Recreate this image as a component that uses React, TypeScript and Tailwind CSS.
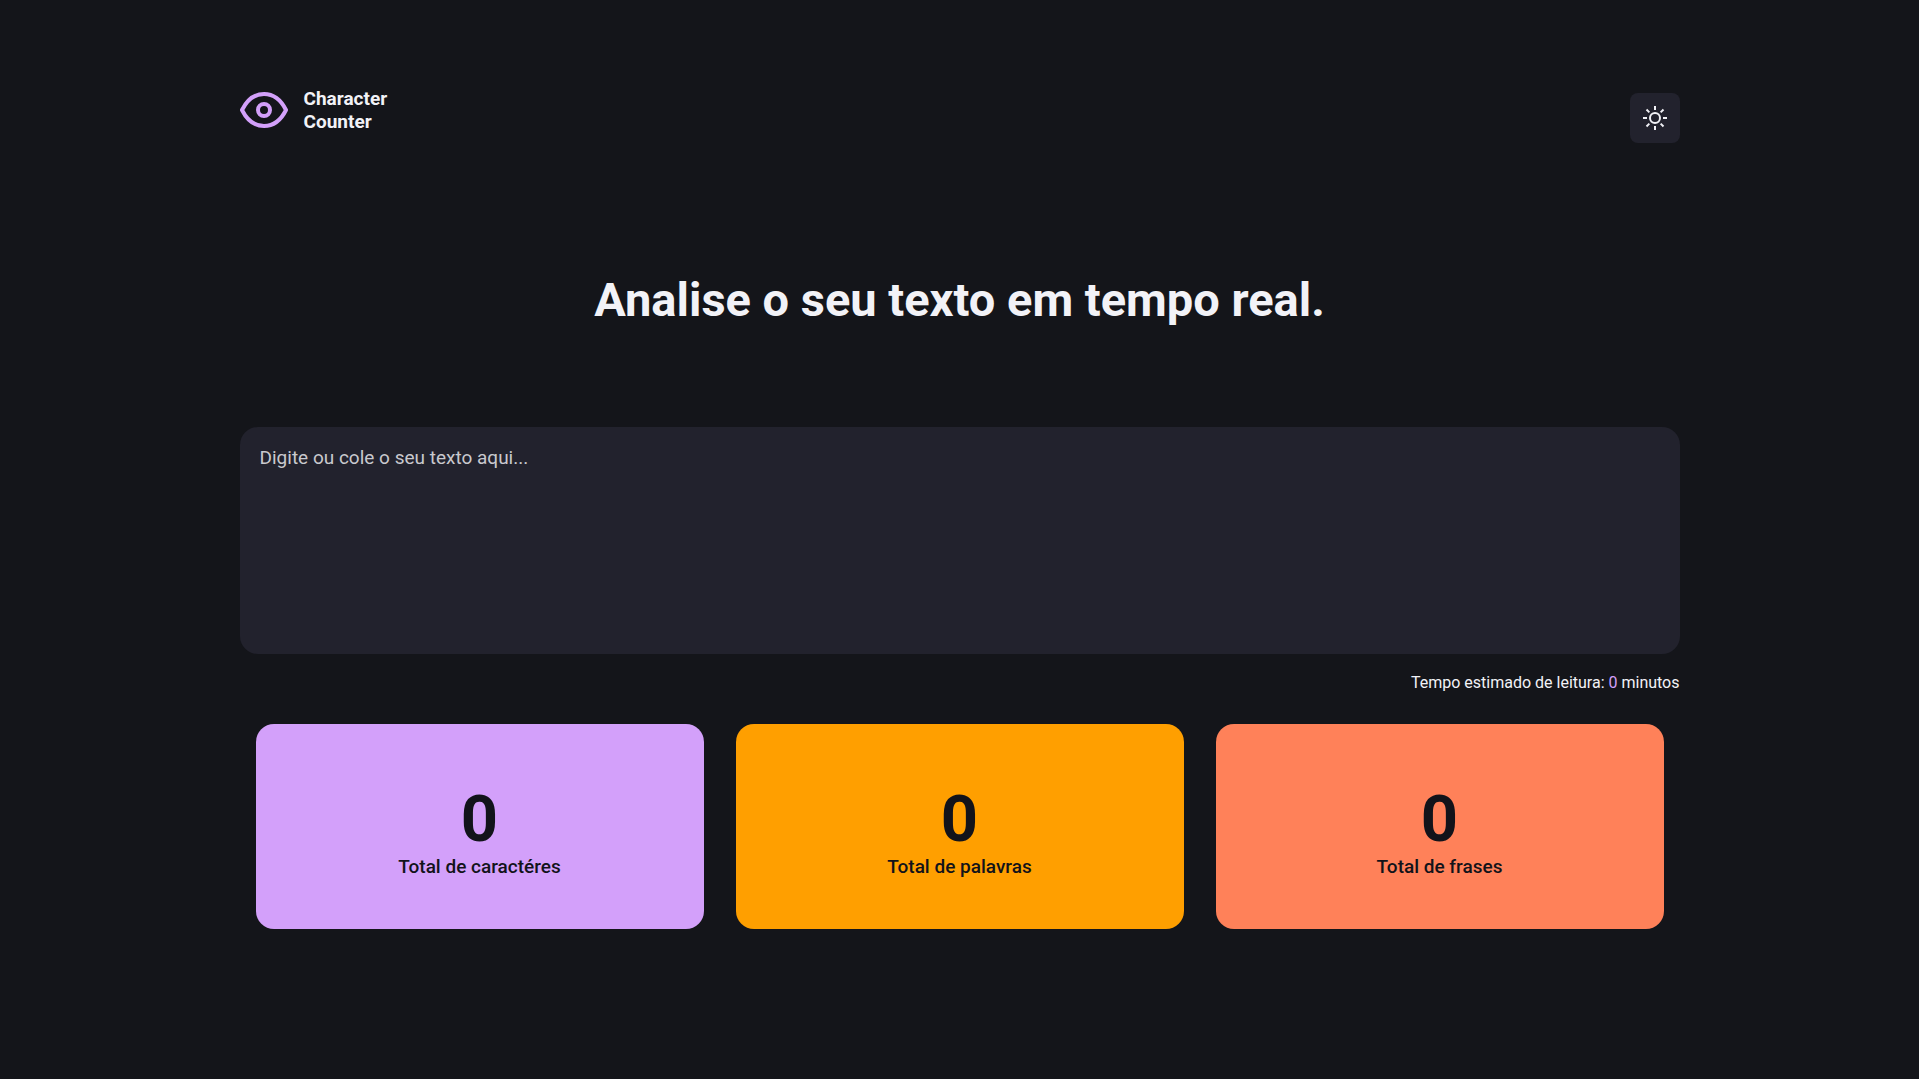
import { useState } from "react";

const rays = [0, 45, 90, 135, 180, 225, 270, 315];

function EyeIcon() {
  return (
    <svg viewBox="0 0 48 36" className="h-9 w-12 shrink-0" fill="none" stroke="#d3a0fa" strokeWidth="4" strokeLinejoin="round" aria-hidden="true">
      <path d="M24 2C14.5 2 7 8 2 18c5 10 12.500 16 22 16s17-6 22-16C41 8 33.500 2 24 2Z" />
      <circle cx="24" cy="18" r="6" />
    </svg>
  );
}

function SunIcon() {
  return (
    <svg viewBox="0 0 24 24" className="size-6" fill="none" stroke="#f2f2f7" strokeWidth="2" aria-hidden="true">
      <circle cx="12" cy="12" r="5" />
      {rays.map((angle) => (
        <path key={angle} d="M12 0v4" transform={`rotate(${angle} 12 12)`} />
      ))}
    </svg>
  );
}

function StatCard({ value, label, color }: { value: number; label: string; color: string }) {
  return (
    <article className={`flex flex-1 flex-col items-center rounded-[18px] px-6 pt-[61px] pb-[50px] text-[#12131a] ${color}`}>
      <strong className="text-[65px] leading-[68px] font-bold">{value}</strong>
      <span className="mt-[2px] text-[19px] leading-6 font-medium">{label}</span>
    </article>
  );
}

export default function App() {
  const [text, setText] = useState("");
  const words = text.trim() ? text.trim().split(/\s+/).length : 0;
  const sentences = text.split(/[.!?]+/).filter((part) => part.trim()).length;

  return (
    <div className="min-h-screen bg-[#14151a] px-6 font-['Roboto',sans-serif] text-[#f2f2f7]">
      <div className="mx-auto max-w-[1440px] pt-[87px] pb-16">
        <header className="flex items-start justify-between">
          <a href="#" className="flex items-center gap-4 text-[19px] leading-[23px] font-bold">
            <EyeIcon />
            <span>
              Character
              <br />
              Counter
            </span>
          </a>
          <button type="button" aria-label="Alternar tema" className="mt-[6px] flex size-[50px] items-center justify-center rounded-lg bg-[#22222d]">
            <SunIcon />
          </button>
        </header>
        <main>
          <h1 className="mt-32 text-center text-[47px] leading-[58px] font-bold">Analise o seu texto em tempo real.</h1>
          <textarea
            aria-label="Texto para análise"
            placeholder="Digite ou cole o seu texto aqui..."
            value={text}
            onChange={(event) => setText(event.target.value)}
            className="mt-[98px] block h-[227px] w-full resize-none rounded-[18px] bg-[#22222d] px-5 py-[19px] text-[19px] leading-6 outline-none placeholder:text-[#c9c9ce]"
          />
          <p className="mt-[19px] text-right text-base leading-5">
            Tempo estimado de leitura: <span className="text-[#d3a0fa]">{Math.ceil(words / 200)}</span> minutos
          </p>
          <section className="mt-[31px] flex gap-8 px-4">
            <StatCard value={text.length} label="Total de caractéres" color="bg-[#d3a0fa]" />
            <StatCard value={words} label="Total de palavras" color="bg-[#ff9f00]" />
            <StatCard value={sentences} label="Total de frases" color="bg-[#ff8159]" />
          </section>
        </main>
      </div>
    </div>
  );
}
